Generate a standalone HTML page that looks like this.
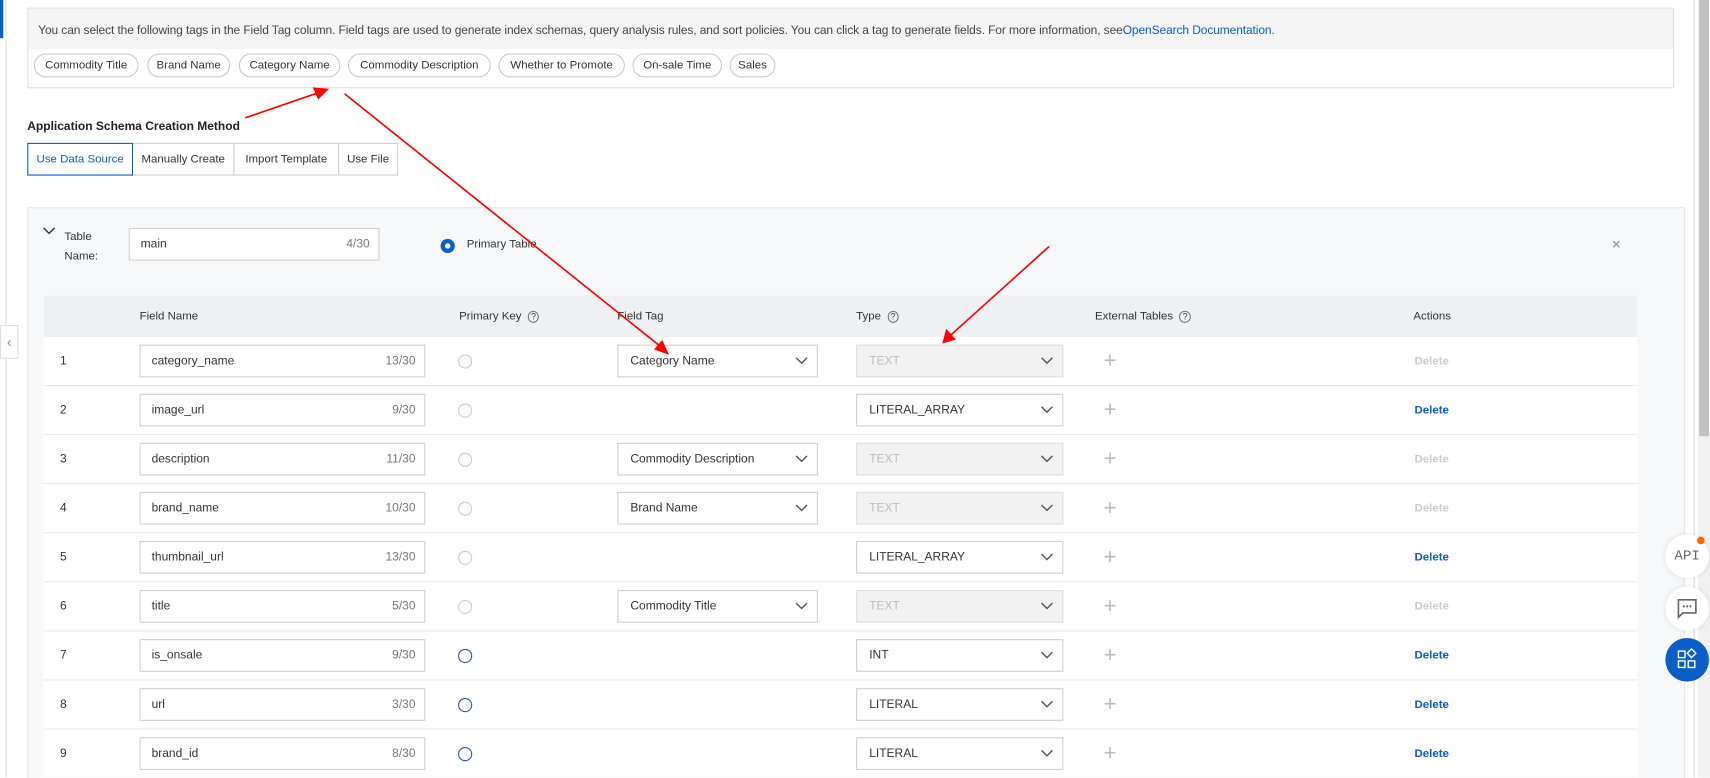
<!DOCTYPE html>
<html><head><meta charset="utf-8"><style>
*{box-sizing:border-box;margin:0;padding:0}
html,body{width:1710px;height:778px;overflow:hidden;background:#fff}
#w{width:1568px;height:713px;transform:scale(1.0906);transform-origin:0 0;position:relative;font-family:"Liberation Sans",sans-serif;font-size:11px;color:#333}
.a{position:absolute;white-space:nowrap}
.tag{position:absolute;top:49px;height:22px;border:1px solid #c8c8c8;border-radius:11px;line-height:20px;background:#fff;font-size:10.5px;text-align:center;white-space:nowrap;overflow:hidden}
.btn{position:absolute;top:131px;height:30px;border:1px solid #d0d0d0;line-height:28px;font-size:10.5px;background:#fff;text-align:center;white-space:nowrap;overflow:hidden}
.inp{position:absolute;height:30px;border:1px solid #cfcfcf;background:#fff;line-height:29px;padding:0 10px;font-size:11px}
.inp span{position:absolute;right:8px;color:#777}
.sel{position:absolute;height:30px;border:1px solid #cfcfcf;background:#fff;line-height:29px;padding:0 11px;font-size:11px;white-space:nowrap}
.sel.dis{background:#f2f2f2;color:#bbb;border-color:#ddd}
.sel svg{position:absolute;right:8px;top:10px}
.rad{position:absolute;width:13px;height:13px;border-radius:50%;border:1px solid #ccc;background:#fafafa}
.rad.on{border:1.5px solid #2f5597;background:#fff}
.row{position:absolute;left:40px;width:1461px;height:45px;background:#fff;border-bottom:1px solid #e8e8e8}
.del{position:absolute;left:1257px;top:16px;font-weight:bold;font-size:10.5px;color:#0a5ec7}
.del.d{color:#ccc}
.plus{position:absolute;left:972px;top:12px;color:#bbb;font-size:20px;line-height:20px}
</style></head><body><div id="w">
<div class="a" style="left:0;top:0;width:3px;height:35px;background:#0a5ec7"></div>
<div class="a" style="left:5px;top:0;width:1px;height:713px;background:#e0e0e0"></div>
<div class="a" style="left:0;top:298px;width:17px;height:31px;border:1px solid #ddd;background:#fff;color:#999;text-align:center;line-height:29px;font-size:14px">‹</div>
<div class="a" style="left:25px;top:7px;width:1510px;height:74px;border:1px solid #ddd;background:#fff">
<div style="height:37px;background:#f5f5f5;line-height:40px;padding-left:9px;font-size:11px;color:#444;letter-spacing:-0.1px">You can select the following tags in the Field Tag column. Field tags are used to generate index schemas, query analysis rules, and sort policies. You can click a tag to generate fields. For more information, see<span style="color:#0a5ec7">OpenSearch Documentation</span>.</div></div>
<div class="tag" style="left:31px;width:96px">Commodity Title</div>
<div class="tag" style="left:135px;width:76px">Brand Name</div>
<div class="tag" style="left:219px;width:93px">Category Name</div>
<div class="tag" style="left:319px;width:131px">Commodity Description</div>
<div class="tag" style="left:457px;width:116px">Whether to Promote</div>
<div class="tag" style="left:580px;width:82px">On-sale Time</div>
<div class="tag" style="left:669px;width:42px">Sales</div>
<div class="a" style="left:25px;top:110px;font-size:11px;font-weight:bold;color:#222">Application Schema Creation Method</div>
<div class="btn" style="left:25px;width:97px;border-color:#0a5ec7;color:#0a5ec7;z-index:2">Use Data Source</div>
<div class="btn" style="left:121px;width:94px">Manually Create</div>
<div class="btn" style="left:214px;width:97px">Import Template</div>
<div class="btn" style="left:310px;width:55px">Use File</div>
<div class="a" style="left:25px;top:190px;width:1520px;height:530px;background:#f7f8fa;border:1px solid #e6e6e6"></div>
<svg class="a" style="left:39px;top:208px" width="12" height="8"><path d="M1 1l5 5 5-5" fill="none" stroke="#333" stroke-width="1.3"/></svg>
<div class="a" style="left:59px;top:208px;font-size:10.5px;line-height:18px">Table<br>Name:</div>
<div class="inp" style="left:118px;top:209px;width:230px">main<span>4/30</span></div>
<div class="rad on" style="left:404px;top:219px;border:4px solid #0a5ec7;box-shadow:inset 0 0 0 1.5px #fff"></div>
<div class="a" style="left:428px;top:218px;font-size:10.5px">Primary Table</div>
<div class="a" style="left:1478px;top:216px;color:#888;font-size:14px">×</div>
<div class="a" style="left:40px;top:271px;width:1461px;height:38px;background:#eef0f3;font-size:10.5px;line-height:38px">
<span class="a" style="left:88px">Field Name</span><span class="a" style="left:381px">Primary Key &nbsp;<span style="border:1px solid #777;border-radius:50%;font-size:8px;padding:0 2px;line-height:8px">?</span></span><span class="a" style="left:526px">Field Tag</span><span class="a" style="left:745px">Type &nbsp;<span style="border:1px solid #777;border-radius:50%;font-size:8px;padding:0 2px">?</span></span><span class="a" style="left:964px">External Tables &nbsp;<span style="border:1px solid #777;border-radius:50%;font-size:8px;padding:0 2px">?</span></span><span class="a" style="left:1256px">Actions</span></div>
<div id="rows"></div>
<svg class="a" style="left:0;top:0" width="1568" height="713"><g stroke="#f00" stroke-width="1.5" fill="#f00">
<line x1="225" y1="108" x2="292" y2="85"/><polygon points="300,82 288,81 292,90"/>
<line x1="316" y1="86" x2="606" y2="318"/><polygon points="612,324 601,320 607,313"/>
<line x1="962" y1="226" x2="871" y2="308"/><polygon points="865,314 868,303 875,311"/></g></svg>
<div class="a" style="left:1553px;top:0;width:1px;height:713px;background:#ddd"></div>
<div class="a" style="left:1557px;top:0;width:11px;height:713px;background:#f1f1f1"></div>
<div class="a" style="left:1558px;top:0;width:9px;height:400px;background:#c1c1c1"></div>
<div class="a" style="left:1527px;top:490px;width:40px;height:40px;border-radius:50%;background:#fff;box-shadow:0 0 6px rgba(0,0,0,.1);text-align:center;line-height:40px;font-size:13px;color:#666;font-family:'Liberation Mono',monospace">API</div>
<div class="a" style="left:1556px;top:492px;width:7px;height:7px;border-radius:50%;background:#f60"></div>
<div class="a" style="left:1527px;top:538px;width:40px;height:40px;border-radius:50%;background:#fff;box-shadow:0 0 6px rgba(0,0,0,.1)"><svg width="40" height="40"><path d="M12 12h16v12h-12l-4 4z" fill="none" stroke="#666" stroke-width="1.5"/><circle cx="17" cy="18" r="1" fill="#666"/><circle cx="20" cy="18" r="1" fill="#666"/><circle cx="23" cy="18" r="1" fill="#666"/></svg></div>
<div class="a" style="left:1527px;top:585px;width:40px;height:40px;border-radius:50%;background:#0a5ec7"><svg width="40" height="40" fill="none" stroke="#fff" stroke-width="1.3"><rect x="12" y="12" width="6" height="6"/><rect x="12" y="21" width="6" height="6"/><rect x="21" y="21" width="6" height="6"/><path d="M24 10l4 4-4 4-4-4z"/></svg></div>
</div>
<script>
var d=[["category_name","13/30","Category Name","TEXT",1],["image_url","9/30","","LITERAL_ARRAY",0],["description","11/30","Commodity Description","TEXT",1],["brand_name","10/30","Brand Name","TEXT",1],["thumbnail_url","13/30","","LITERAL_ARRAY",0],["title","5/30","Commodity Title","TEXT",1],["is_onsale","9/30","","INT",2],["url","3/30","","LITERAL",2],["brand_id","8/30","","LITERAL",2]];
var ch='<svg width="12" height="8"><path d="M1 1l5 5 5-5" fill="none" stroke="#555" stroke-width="1.3"/></svg>',h='';
d.forEach(function(r,i){var t=309+i*45;h+='<div class="row" style="top:'+t+'px"><span class="a" style="left:15px;top:16px">'+(i+1)+'</span><div class="inp" style="left:88px;top:7px;width:262px">'+r[0]+'<span>'+r[1]+'</span></div><div class="rad'+(r[4]==2?' on':'')+'" style="left:380px;top:16px"></div>'+(r[2]?'<div class="sel" style="left:526px;top:7px;width:184px">'+r[2]+ch+'</div>':'')+'<div class="sel'+(r[4]==1?' dis':'')+'" style="left:745px;top:7px;width:190px">'+r[3]+ch+'</div><span class="plus">+</span><span class="del'+(r[4]==1?' d':'')+'">Delete</span></div>';});
document.getElementById('rows').outerHTML=h;
</script>
</body></html>
